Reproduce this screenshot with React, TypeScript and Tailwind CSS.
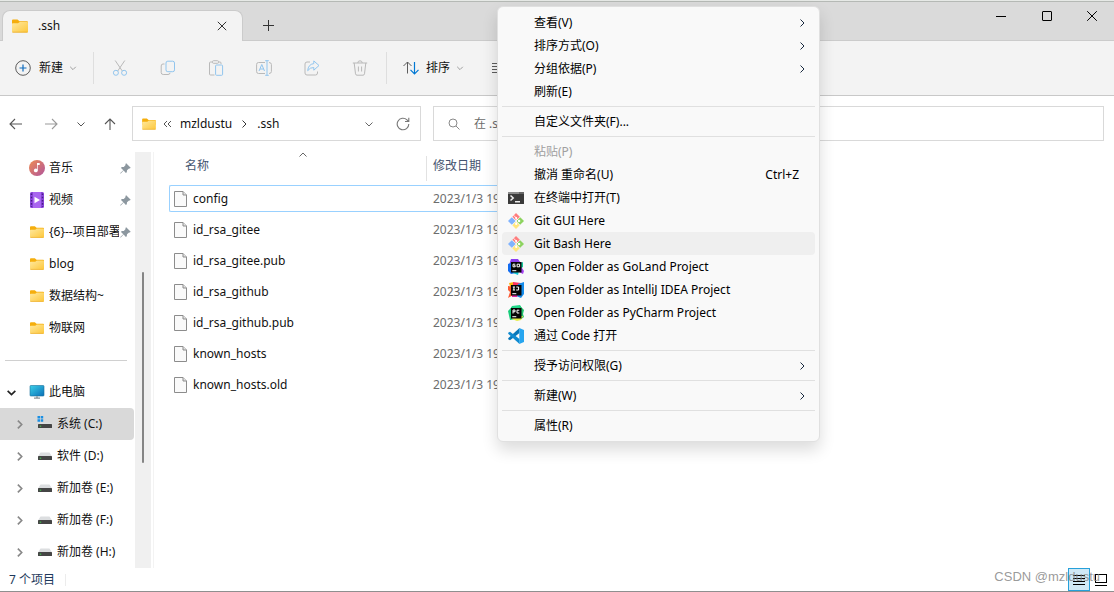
import type { ReactNode } from 'react';
import clsx from 'clsx';

interface MenuEntry {
  label: string;
  icon?: ReactNode;
  shortcut?: string;
  submenu?: boolean;
  disabled?: boolean;
  active?: boolean;
}

function Chevron({ dir, className }: { dir: 'down' | 'right' | 'up'; className?: string }) {
  const paths = {
    down: 'M1.5 3.5L5 7L8.5 3.5',
    right: 'M3.5 1.5L7 5L3.5 8.5',
    up: 'M1.5 6.5L5 3L8.5 6.5',
  };
  return (
    <svg viewBox="0 0 10 10" fill="none" stroke="currentColor" className={clsx('shrink-0', className)}>
      <path d={paths[dir]} />
    </svg>
  );
}

function FolderIcon({ className }: { className?: string }) {
  return (
    <svg viewBox="0 0 16 14" className={clsx('shrink-0', className)}>
      <defs>
        <linearGradient id="folder" x1="0" y1="0" x2="1" y2="1">
          <stop offset="0" stopColor="#ffe9a0" />
          <stop offset="1" stopColor="#fdc73a" />
        </linearGradient>
      </defs>
      <path d="M0 1.5Q0 .5 1 .5H5.5L7.5 2.2H15Q16 2.2 16 3.2V8H0Z" fill="#f5ae0d" />
      <path d="M0 5Q0 4.3.8 4.3H6L7.8 3H15.2Q16 3 16 3.8V12.5Q16 13.5 15 13.5H1Q0 13.5 0 12.5Z" fill="url(#folder)" />
      <path d="M.4 13.2H15.6" stroke="#e9a820" strokeWidth=".7" />
    </svg>
  );
}

function FileIcon() {
  return (
    <svg viewBox="0 0 14 16" className="h-4 w-3.5 shrink-0" fill="#fafafa" stroke="#8c8c8c">
      <path d="M.5.5H9L12.5 4V15.5H.5Z" />
      <path d="M9 .5V4H12.5" fill="#e4e4e4" />
    </svg>
  );
}

function MusicIcon() {
  return (
    <svg viewBox="0 0 16 16" className="size-4 shrink-0">
      <defs>
        <linearGradient id="music" x1="0" y1="0" x2="1" y2="1">
          <stop offset="0" stopColor="#ef8d53" />
          <stop offset="1" stopColor="#b0549c" />
        </linearGradient>
      </defs>
      <circle cx="8" cy="8" r="8" fill="url(#music)" />
      <circle cx="6.8" cy="10.4" r="1.9" fill="#fff" />
      <path d="M8 3H10.7V5H8.7V10.5H8Z" fill="#fff" />
    </svg>
  );
}

function VideoIcon() {
  return (
    <svg viewBox="0 0 16 16" className="size-4 shrink-0">
      <rect x="1" width="14" height="16" rx="1.5" fill="#8b46dc" />
      <rect x="4" width="8" height="16" fill="#a966ef" />
      <path d="M2.5 1.5V15M13.5 1.5V15" stroke="#4a1c85" strokeWidth="1.4" strokeDasharray="1.6 1.6" />
      <path d="M5.5 4.8L11 8L5.5 11.2Z" fill="#fff" />
    </svg>
  );
}

function MonitorIcon() {
  return (
    <svg viewBox="0 0 16 15" className="h-4 w-4 shrink-0">
      <defs>
        <linearGradient id="monitor" x1="0" y1="0" x2="1" y2="1">
          <stop offset="0" stopColor="#3bd0e8" />
          <stop offset="1" stopColor="#0a6fb8" />
        </linearGradient>
      </defs>
      <rect x="1" y="1" width="14" height="10.5" rx=".8" fill="url(#monitor)" stroke="#17719c" strokeWidth=".6" />
      <path d="M7 11.8H9V13.3H7Z" fill="#9aa3a9" />
      <path d="M5 13.6H11" stroke="#6c777e" strokeWidth="1" />
    </svg>
  );
}

function DriveIcon({ system }: { system?: boolean }) {
  return (
    <svg viewBox="0 0 16 16" className="size-4 shrink-0">
      {system && (
        <path d="M.5 0H3V2.5H.5ZM3.7 0H6.2V2.5H3.7ZM.5 3.2H3V5.7H.5ZM3.7 3.2H6.2V5.7H3.7Z" fill="#1a8fe3" />
      )}
      <path d={system ? 'M3 6.5H13L15 9H1Z' : 'M3.5 4.5H12.5L15 8.5H1Z'} fill="#dcdee0" />
      <rect x="1" y="8" width="14" height="4" rx=".6" fill="#454545" />
      <path d="M2.7 10.2H4.2" stroke="#3fc04d" strokeWidth="1.2" />
    </svg>
  );
}

function PinIcon() {
  return (
    <svg viewBox="0 0 11 11" className="size-[11px] shrink-0" fill="#8c979f">
      <path d="M6.2.3L10.7 4.8L9.8 5.6L9 5.4L7 7.3L6.8 9.3L5.9 10L3.6 7.5L.8 10.6L.3 10.5L.3 10L3.3 7.2L1 4.9L1.7 4L3.8 4L5.6 2L5.4 1.1Z" />
    </svg>
  );
}

function TerminalIcon() {
  return (
    <svg viewBox="0 0 16 16" className="size-4">
      <rect y="2" width="16" height="12" rx=".5" fill="#3a3a3a" />
      <path d="M0 2H11V4H0Z" fill="#8b8b8b" />
      <path d="M11 2H16V4H11Z" fill="#666" />
      <path d="M2.5 5.5L5.2 8L2.5 10.5M7 11.7H12" fill="none" stroke="#eee" strokeWidth="1.5" />
    </svg>
  );
}

function GitIcon() {
  return (
    <svg viewBox="0 0 16 16" className="size-4">
      <path d="M8 0L11.8 3.8L8 7.4L4.4 3.7Z" fill="#ff7d7d" />
      <path d="M3.8 4.2L7.6 8L3.8 11.8L0 8Z" fill="#80b3ff" />
      <path d="M12.2 4.2L16 8L12.2 11.8L8.4 8Z" fill="#8dd35f" />
      <path d="M8 8.6L11.7 12.3L8 16L4.3 12.3Z" fill="#ffe680" />
      <path d="M5.8 2.4L8.2 5V11M8.2 5.2L11 8" fill="none" stroke="#fff" strokeWidth=".9" />
      <circle cx="8.2" cy="5.1" r="1" fill="#fff" />
      <circle cx="11.1" cy="8" r="1.2" fill="#fff" />
      <circle cx="8.2" cy="10.9" r="1.1" fill="#fff" />
    </svg>
  );
}

// Black square with two glyph marks over a coloured splash, shared by the IDE icons
function IdeIcon({ splash, children }: { splash: ReactNode; children: ReactNode }) {
  return (
    <svg viewBox="0 0 16 16" className="size-4">
      {splash}
      <rect x="3" y="3" width="10.5" height="10.5" fill="#060606" />
      <g fill="none" stroke="#fff" strokeWidth="1">
        {children}
        <path d="M4.3 11.7H8.3" />
      </g>
    </svg>
  );
}

function GoLandIcon() {
  return (
    <IdeIcon
      splash={
        <>
          <path d="M3 0L10 0L12 3L8 9L1 6Z" fill="#8b3df0" />
          <path d="M0 5L6 3L8 14L3 15L0 12Z" fill="#136df0" />
          <path d="M10 2L15 4L14 9L16 12L15 15L9 12Z" fill="#a642f2" />
          <path d="M5 12L11 12L10 16L5 14Z" fill="#12c7d6" />
          <path d="M13 4L15 3V8L13 9Z" fill="#12c799" />
        </>
      }
    >
      <path d="M7.3 5.2H5V7.8H7.2V6.6H6.2M9.1 5.2H11.6V7.8H9.1Z" />
    </IdeIcon>
  );
}

function IdeaIcon() {
  return (
    <IdeIcon
      splash={
        <>
          <path d="M1 1L6 0L8 6L3 8Z" fill="#fdb60d" />
          <path d="M5 0L13 1L14 5L5 7Z" fill="#fe315d" />
          <path d="M0 4L6 5L7 12L0 16L2 10L0 8Z" fill="#fc5a32" />
          <path d="M10 2L16 0L16 12L13 16L8 14Z" fill="#148bea" />
          <path d="M4 11L10 12L9 15L4 15Z" fill="#de2aa2" />
        </>
      }
    >
      <path d="M4.8 5H7M5.9 5V8M4.8 8H7M8.3 5H10.6V8H8.2" />
    </IdeIcon>
  );
}

function PyCharmIcon() {
  return (
    <IdeIcon
      splash={
        <>
          <path d="M4 1L12 0L15 5L8 9L1 6Z" fill="#21d789" />
          <path d="M0 6L4 2L8 14L2 15Z" fill="#16cd7a" />
          <path d="M12 1L16 5L15 9L16 12L12 15L9 9Z" fill="#21c46c" />
          <path d="M5 11L15 11L13 15L9 16L4 14Z" fill="#e7ee45" />
        </>
      }
    >
      <path d="M5 8.5V5H7V6.8H5M11.3 5.2H9V8H11.3" />
    </IdeIcon>
  );
}

function CodeIcon() {
  return (
    <svg viewBox="0 0 16 16" className="size-4">
      <path d="M11.5 0V5L2 12.2L.2 11.2V10.2Z" fill="#0877b9" />
      <path d="M.2 5.8V4.8L2 3.8L11.5 11V16Z" fill="#0f8ad0" />
      <path d="M11.3 0L16 2V14L11.3 16Z" fill="#27a5ef" />
    </svg>
  );
}

const menuGroups: MenuEntry[][] = [
  [
    { label: '查看(V)', submenu: true },
    { label: '排序方式(O)', submenu: true },
    { label: '分组依据(P)', submenu: true },
    { label: '刷新(E)' },
  ],
  [{ label: '自定义文件夹(F)...' }],
  [
    { label: '粘贴(P)', disabled: true },
    { label: '撤消 重命名(U)', shortcut: 'Ctrl+Z' },
    { label: '在终端中打开(T)', icon: <TerminalIcon /> },
    { label: 'Git GUI Here', icon: <GitIcon /> },
    { label: 'Git Bash Here', icon: <GitIcon />, active: true },
    { label: 'Open Folder as GoLand Project', icon: <GoLandIcon /> },
    { label: 'Open Folder as IntelliJ IDEA Project', icon: <IdeaIcon /> },
    { label: 'Open Folder as PyCharm Project', icon: <PyCharmIcon /> },
    { label: '通过 Code 打开', icon: <CodeIcon /> },
  ],
  [{ label: '授予访问权限(G)', submenu: true }],
  [{ label: '新建(W)', submenu: true }],
  [{ label: '属性(R)' }],
];

const quickAccess = [
  { label: '音乐', icon: <MusicIcon />, pinned: true },
  { label: '视频', icon: <VideoIcon />, pinned: true },
  { label: '{6}--项目部署', icon: <FolderIcon className="h-4 w-4 p-px" />, pinned: true },
  { label: 'blog', icon: <FolderIcon className="h-4 w-4 p-px" /> },
  { label: '数据结构~', icon: <FolderIcon className="h-4 w-4 p-px" /> },
  { label: '物联网', icon: <FolderIcon className="h-4 w-4 p-px" /> },
];

const drives = ['系统 (C:)', '软件 (D:)', '新加卷 (E:)', '新加卷 (F:)', '新加卷 (H:)'];

const files = [
  'config',
  'id_rsa_gitee',
  'id_rsa_gitee.pub',
  'id_rsa_github',
  'id_rsa_github.pub',
  'known_hosts',
  'known_hosts.old',
];

function TitleBar() {
  return (
    <div className="flex h-[39px] items-end border-b border-[#cbcbcb] bg-[#dadada]">
      <div className="-mb-px ml-[2px] flex h-[31px] w-[241px] items-center rounded-t-lg border border-b-0 border-[#cbcbcb] bg-[#f3f3f3] pr-[11px] pl-[9px]">
        <FolderIcon className="h-3.5 w-4" />
        <span className="ml-2.5 flex-1">.ssh</span>
        <button aria-label="关闭标签页" className="p-1 text-[#333]">
          <svg viewBox="0 0 10 10" className="size-2.5" stroke="currentColor">
            <path d="M.8.8L9.2 9.2M9.2.8L.8 9.2" />
          </svg>
        </button>
      </div>
      <button aria-label="新标签页" className="ml-4 p-1 pb-[9px] text-[#333]">
        <svg viewBox="0 0 11 11" className="size-[11px]" stroke="currentColor">
          <path d="M0 5.5H11M5.5 0V11" />
        </svg>
      </button>
      <div className="ml-auto flex self-start">
        <button aria-label="最小化" className="flex h-7 w-[46px] items-center justify-center">
          <svg viewBox="0 0 10 10" className="size-2.5" stroke="#000">
            <path d="M0 5.5H10" />
          </svg>
        </button>
        <button aria-label="最大化" className="flex h-7 w-[46px] items-center justify-center">
          <svg viewBox="0 0 10 10" className="size-2.5" fill="none" stroke="#000">
            <rect x=".5" y=".5" width="9" height="9" rx=".5" />
          </svg>
        </button>
        <button aria-label="关闭" className="flex h-7 w-11 items-center justify-center">
          <svg viewBox="0 0 10 10" className="size-2.5" stroke="#000">
            <path d="M.2.2L9.8 9.8M9.8.2L.2 9.8" />
          </svg>
        </button>
      </div>
    </div>
  );
}

function ToolButton({ label, children }: { label: string; children: ReactNode }) {
  return (
    <button aria-label={label} disabled className="flex h-8 w-12 items-center justify-center">
      <svg viewBox="0 0 16 16" className="size-4" fill="none" stroke="#b9b9b9">
        {children}
      </svg>
    </button>
  );
}

function Toolbar() {
  return (
    <div className="flex h-[55px] items-center border-b border-[#c8c8c8] bg-[#f3f3f3]">
      <button className="flex w-[93px] items-center pl-[15px]">
        <svg viewBox="0 0 16 16" className="size-4" fill="none">
          <circle cx="8" cy="8" r="7.3" stroke="#5c5c5c" />
          <path d="M4.5 8H11.5M8 4.5V11.5" stroke="#0f6cbd" strokeWidth="1.2" />
        </svg>
        <span className="ml-2">新建</span>
        <Chevron dir="down" className="ml-1.5 size-2 text-[#888]" />
      </button>
      <div className="mr-[2px] h-8 w-px bg-[#dedede]" />
      <ToolButton label="剪切">
        <path d="M3.2.5L10.3 11M12.8.5L5.7 11" />
        <circle cx="3.9" cy="12.8" r="2.5" stroke="#91c5ee" />
        <circle cx="12.1" cy="12.8" r="2.5" stroke="#91c5ee" />
      </ToolButton>
      <ToolButton label="复制">
        <path d="M4.5 4H3Q1.2 4 1.2 6V12.5Q1.2 14.5 3.2 14.5H8Q10 14.5 10 12.8" />
        <rect x="6" y="1.2" width="8.5" height="10.5" rx="1.8" stroke="#91c5ee" />
      </ToolButton>
      <ToolButton label="粘贴">
        <path d="M4.5 2H2.5Q1.5 2 1.5 3V14Q1.5 15 2.5 15H6.5M10.5 2H12Q13 2 13 3V4" />
        <rect x="4.5" y=".7" width="6" height="2.6" rx="1" />
        <rect x="7.6" y="5" width="7" height="10.3" rx="1" stroke="#91c5ee" />
      </ToolButton>
      <ToolButton label="重命名">
        <path d="M9 2.5H2.5Q.6 2.5.6 4.5V11.5Q.6 13.5 2.5 13.5H9M13 2.5Q15.4 2.5 15.4 4.5V11.5Q15.4 13.5 13 13.5" />
        <path d="M3 11L5.8 4.5L8.5 11M4 9H7.6M9.2.7H12.8M11 .7V15.3M9.2 15.3H12.8" stroke="#91c5ee" />
      </ToolButton>
      <ToolButton label="共享">
        <path d="M6 2H3Q1 2 1 4V13Q1 15 3 15H11.5Q13.5 15 13.5 13V11.5" />
        <path d="M9.8.9L15 5.5L9.8 10.2V7.5Q6 7.3 3.7 10.7Q4.2 4.3 9.8 3.6Z" stroke="#91c5ee" />
      </ToolButton>
      <ToolButton label="删除">
        <path d="M.8 3H15.2M5.8 3Q5.8.8 8 .8Q10.2.8 10.2 3M2.2 3L3.5 13.8Q3.7 15.2 5 15.2H11Q12.3 15.2 12.5 13.8L13.8 3M6.4 6.5V11.5M9.6 6.5V11.5" />
      </ToolButton>
      <div className="ml-[2px] h-8 w-px bg-[#dedede]" />
      <button className="ml-4 flex items-center">
        <svg viewBox="0 0 16 14" className="h-3.5 w-4" fill="none">
          <path d="M4.5 12.5V1M.5 5L4.5 1L8.5 5" stroke="#5c5c5c" />
          <path d="M11.5 1V12.8M7.5 8.8L11.5 12.8L15.5 8.8" stroke="#0078d4" strokeWidth="1.2" />
        </svg>
        <span className="ml-[7px]">排序</span>
        <Chevron dir="down" className="ml-1.5 size-2 text-[#888]" />
      </button>
      <button aria-label="查看" className="ml-7 flex items-center">
        <svg viewBox="0 0 16 16" className="size-4" stroke="#5c5c5c">
          <path d="M0 3.5H16M0 6.5H16M0 9.5H16M0 12.5H16" />
        </svg>
      </button>
    </div>
  );
}

function AddressBar() {
  return (
    <div className="flex h-14 pt-2.5 pr-2.5">
      <div className="flex h-[35px] w-[132px] items-center">
        <button aria-label="后退" className="ml-[9px] text-[#555]">
          <svg viewBox="0 0 14 12" className="h-3 w-3.5" fill="none" stroke="currentColor" strokeWidth="1.1">
            <path d="M13 6H1M6 1L1 6L6 11" />
          </svg>
        </button>
        <button aria-label="前进" className="ml-[21px] text-[#9a9a9a]">
          <svg viewBox="0 0 14 12" className="h-3 w-3.5" fill="none" stroke="currentColor" strokeWidth="1.1">
            <path d="M1 6H13M8 1L13 6L8 11" />
          </svg>
        </button>
        <button aria-label="最近浏览的位置" className="ml-[18px] text-[#555]">
          <Chevron dir="down" className="size-2.5" />
        </button>
        <button aria-label="上移" className="ml-[18px] text-[#555]">
          <svg viewBox="0 0 12 12" className="size-3" fill="none" stroke="currentColor" strokeWidth="1.1">
            <path d="M6 12V1M1 6L6 1L11 6" />
          </svg>
        </button>
      </div>
      <div className="flex h-[35px] w-[289px] items-center border border-[#d9d9d9] px-2">
        <FolderIcon className="h-3.5 w-4 p-px" />
        <svg viewBox="0 0 9 8" className="ml-1.5 h-2 w-[9px]" fill="none" stroke="#555">
          <path d="M4 1L1 4L4 7M8 1L5 4L8 7" />
        </svg>
        <a href="#mzldustu" className="ml-2">mzldustu</a>
        <Chevron dir="right" className="ml-[7px] size-2.5 text-[#333]" />
        <a href="#ssh" className="ml-2">.ssh</a>
        <button aria-label="历史记录" className="ml-auto text-[#666]">
          <Chevron dir="down" className="size-2.5" />
        </button>
        <button aria-label="刷新" className="mr-[2px] ml-[22px]">
          <svg viewBox="0 0 14 14" className="size-3.5" fill="none" stroke="#777" strokeWidth="1.1">
            <path d="M12.8 7A5.8 5.8 0 1 1 11 2.8L12.6 4.4M12.8 .8V4.5H9" />
          </svg>
        </button>
      </div>
      <label className="ml-3 flex h-[35px] min-w-0 flex-1 items-center border border-[#d9d9d9] pl-[14px]">
        <svg viewBox="0 0 12 12" className="size-3 shrink-0" fill="none" stroke="#8a8a8a">
          <circle cx="5" cy="5" r="4" />
          <path d="M8 8L11.5 11.5" />
        </svg>
        <input
          type="text"
          aria-label="搜索"
          placeholder="在 .ssh 中搜索"
          className="ml-3.5 min-w-0 flex-1 outline-none placeholder:text-[#6b6b6b]"
        />
      </label>
    </div>
  );
}

function NavPane() {
  return (
    <nav className="w-[135px] shrink-0">
      {quickAccess.map((item) => (
        <a key={item.label} href="#quick" className="flex h-8 items-center pr-1 pl-[29px]">
          {item.icon}
          <span className="ml-1 w-[70px] overflow-hidden whitespace-nowrap">{item.label}</span>
          <span className="ml-px">{item.pinned && <PinIcon />}</span>
        </a>
      ))}
      <div className="flex h-8 items-center pr-2 pl-[5px]">
        <hr className="w-full border-[#d0d0d0]" />
      </div>
      <a href="#pc" className="flex h-8 items-center pl-1.5">
        <Chevron dir="down" className="size-[11px] stroke-[1.5] text-[#222]" />
        <span className="ml-3">
          <MonitorIcon />
        </span>
        <span className="ml-1">此电脑</span>
      </a>
      {drives.map((drive, i) => (
        <a
          key={drive}
          href="#drive"
          className={clsx('mr-px flex h-8 items-center rounded-r-sm pl-3.5 whitespace-nowrap', i === 0 && 'bg-[#d9d9d9]')}
        >
          <Chevron dir="right" className="size-[11px] stroke-[1.5] text-[#888]" />
          <span className="ml-3">
            <DriveIcon system={i === 0} />
          </span>
          <span className="ml-1">{drive}</span>
        </a>
      ))}
    </nav>
  );
}

function FileList() {
  return (
    <table className="w-[600px] table-fixed border-separate border-spacing-x-0 border-spacing-y-[4px] self-start text-left">
      <thead>
        <tr className="h-[25px] align-top text-[#44546f]">
          <th className="relative w-[258px] border-r border-[#e2e2e2] py-0 pl-4 leading-5 font-normal">
            名称
            <Chevron dir="up" className="absolute -top-1.5 left-[129px] size-2.5 text-[#666]" />
          </th>
          <th className="py-0 pl-1.5 leading-5 font-normal">修改日期</th>
        </tr>
      </thead>
      <tbody>
        {files.map((file, i) => (
          <tr key={file} className="h-[27px]">
            <td className={clsx('border-y border-l py-0 pl-1', i === 0 ? 'rounded-l-xs border-[#99d1ff]' : 'border-transparent')}>
              <span className="flex items-center gap-[5px]">
                <FileIcon />
                {file}
              </span>
            </td>
            <td className={clsx('border-y border-r py-0 pl-1.5 text-[#6d6d6d]', i === 0 ? 'border-[#99d1ff]' : 'border-transparent')}>
              2023/1/3 19:25
            </td>
          </tr>
        ))}
      </tbody>
    </table>
  );
}

function StatusBar() {
  return (
    <div className="relative flex h-6 items-center border-b border-[#8f8f8f] pl-[9px] text-[#1e395b]">
      <span>7 个项目</span>
      <div className="ml-2.5 h-3 w-px bg-[#ececec]" />
      <div className="mr-[2px] ml-auto flex">
        <button aria-label="详细信息" className="flex h-[23px] w-[22px] items-center justify-center border border-[#26a0da] bg-[#cfe8f5]">
          <svg viewBox="0 0 12 10" className="h-2.5 w-3" stroke="#000">
            <path d="M0 .5H12M0 3.5H12M0 6.5H12M0 9.5H12" />
          </svg>
        </button>
        <button aria-label="大图标" className="flex h-[23px] w-[22px] items-center justify-center">
          <svg viewBox="0 0 12 12" className="size-3" fill="none" stroke="#000">
            <rect x=".5" y=".5" width="11" height="8" />
            <path d="M0 11.5H12" />
          </svg>
        </button>
      </div>
      <span className="pointer-events-none absolute right-3.5 bottom-1.5 font-['Liberation_Sans'] text-[13px] leading-4 text-[#808080]/80">
        CSDN @mzldustu
      </span>
    </div>
  );
}

function ContextMenu() {
  return (
    <div
      role="menu"
      className="absolute top-[6px] left-[497px] w-[323px] rounded-md border border-[#e0e0e0] bg-[#f9f9f9] p-1 text-black shadow-[0_8px_16px_rgba(0,0,0,0.14)]"
    >
      {menuGroups.map((group, i) => (
        <div key={i}>
          {i > 0 && <hr className="my-[3px] border-[#e0e0e0]" />}
          {group.map((entry) => (
            <button
              key={entry.label}
              role="menuitem"
              disabled={entry.disabled}
              className={clsx(
                'flex h-[23px] w-full items-center rounded-sm pr-2 pl-1.5 text-left whitespace-nowrap',
                entry.active && 'bg-[#efefef]',
                entry.disabled && 'text-[#a0a0a0]',
              )}
            >
              <span className="mr-2.5 w-4">{entry.icon}</span>
              <span className="flex-1">{entry.label}</span>
              {entry.shortcut && <span className="mr-2">{entry.shortcut}</span>}
              {entry.submenu && <Chevron dir="right" className="size-2.5 text-[#1a2a40]" />}
            </button>
          ))}
        </div>
      ))}
    </div>
  );
}

export default function App() {
  return (
    <div className="relative flex min-h-screen flex-col bg-white font-['Noto_Sans','Noto_Sans_CJK_SC',sans-serif] text-[12px] leading-4 text-[#111]">
      <div className="h-[2px] border-b border-[#b5b9b5] bg-[#e6e9e6]" />
      <TitleBar />
      <Toolbar />
      <AddressBar />
      <main className="flex flex-1">
        <NavPane />
        <div className="w-4 shrink-0 bg-[#f0f0f0]">
          <div className="mx-auto mt-[120px] h-[191px] w-[2px] rounded-full bg-[#858585]" />
        </div>
        <div className="mr-[15px] ml-[2px] w-px shrink-0 bg-[#f3f3f3]" />
        <FileList />
      </main>
      <StatusBar />
      <ContextMenu />
    </div>
  );
}
